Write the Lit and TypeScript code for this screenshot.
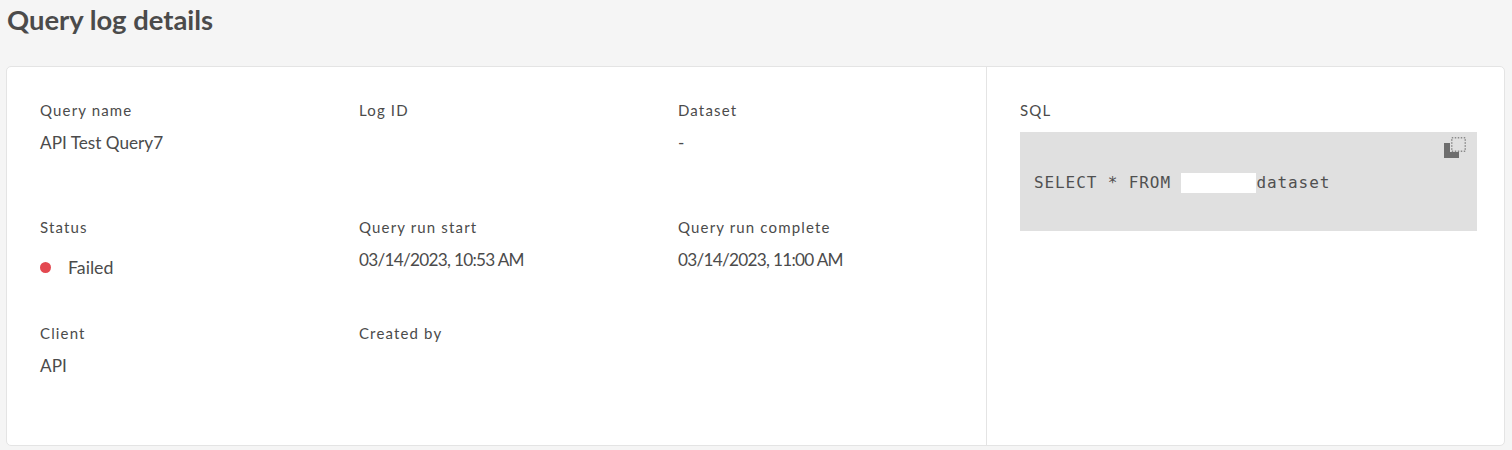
import { LitElement, html, css } from 'lit';
import { customElement } from 'lit/decorators.js';

@customElement('app-root')
export class AppRoot extends LitElement {
  static styles = css`
    :host {
      display: block;
      height: 450px;
      background: #f5f5f5;
      color: #4b4b4b;
      font-family: Lato, 'Open Sans', sans-serif;
      overflow: hidden;
    }
    h1 {
      margin: 0;
      padding: 4px 0 0 7px;
      height: 66px;
      box-sizing: border-box;
      font-size: 27.4px;
      line-height: 32px;
      font-weight: 700;
      color: #4b4b4b;
    }
    .card {
      display: flex;
      margin: 0 7px 0 6px;
      height: 380px;
      box-sizing: border-box;
      background: #fff;
      border: 1px solid #e4e4e4;
      border-radius: 5px;
    }
    .details {
      width: 980px;
      box-sizing: border-box;
      padding: 33px 0 0 33px;
      border-right: 1px solid #e4e4e4;
      display: grid;
      grid-template-columns: 319px 319px 300px;
      grid-template-rows: 117px 106px 100px;
    }
    .label {
      font-size: 15px;
      line-height: 20px;
      letter-spacing: 1.15px;
      color: #4b4b4b;
    }
    .value {
      margin-top: 12px;
      font-size: 17.2px;
      line-height: 22px;
      color: #4b4b4b;
    }
    .date {
      letter-spacing: -0.72px;
    }
    .status {
      display: flex;
      align-items: center;
      gap: 17px;
      margin-top: 19px;
    }
    .status .value {
      margin-top: 0;
      font-size: 17.8px;
    }
    .dot {
      width: 11px;
      height: 11px;
      border-radius: 50%;
      background: #e34850;
    }
    .sql {
      flex: 1;
      padding: 33px 27px 0 33px;
    }
    .code {
      position: relative;
      display: flex;
      align-items: center;
      height: 99px;
      margin-top: 12px;
      padding: 3px 14px 0;
      box-sizing: border-box;
      background: #e0e0e0;
      font-family: 'DejaVu Sans Mono', 'Liberation Mono', monospace;
      font-size: 16px;
      letter-spacing: 0.9px;
      white-space: pre;
      color: #505050;
    }
    .redact {
      display: inline-block;
      width: 75px;
      height: 20px;
      background: #fff;
      vertical-align: -5px;
    }
    .copy {
      position: absolute;
      top: 4px;
      right: 10px;
      width: 24px;
      height: 24px;
    }
  `;

  field(label: string, value: string, valueClass = '') {
    return html`<div>
      <div class="label">${label}</div>
      <div class="value ${valueClass}">${value}</div>
    </div>`;
  }

  render() {
    return html`
      <h1>Query log details</h1>
      <div class="card">
        <div class="details">
          ${this.field('Query name', 'API Test Query7')}
          ${this.field('Log ID', '')}
          ${this.field('Dataset', '-')}
          <div>
            <div class="label">Status</div>
            <div class="status"><span class="dot"></span><span class="value">Failed</span></div>
          </div>
          ${this.field('Query run start', '03/14/2023, 10:53 AM', 'date')}
          ${this.field('Query run complete', '03/14/2023, 11:00 AM', 'date')}
          ${this.field('Client', 'API')}
          ${this.field('Created by', '')}
        </div>
        <div class="sql">
          <div class="label">SQL</div>
          <div class="code">
            <span>SELECT * FROM <span class="redact"></span>dataset</span>
            <svg class="copy" viewBox="0 0 24 24">
              <path d="M1 7h6v9h9v6H1z" fill="#6e6e6e" />
              <rect x="8.75" y="1.75" width="13.5" height="13.5" fill="none" stroke="#8a8a8a" stroke-width="1.5" stroke-dasharray="1.5 1.5" />
            </svg>
          </div>
        </div>
      </div>
    `;
  }
}
